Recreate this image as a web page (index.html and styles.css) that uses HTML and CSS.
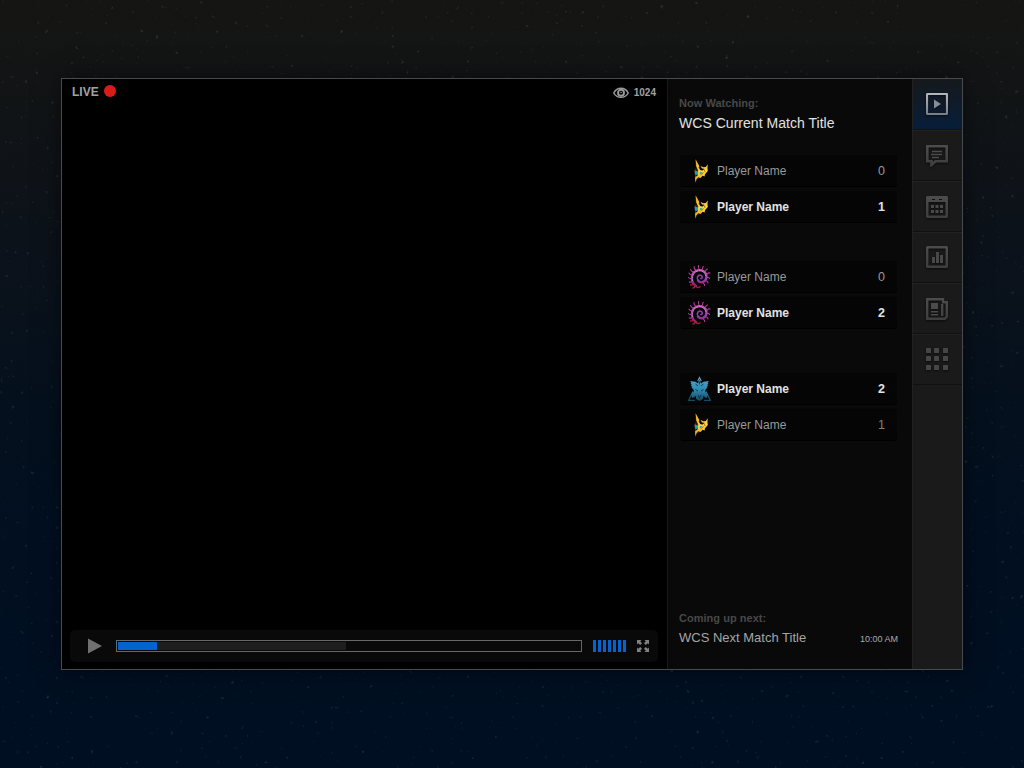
FILE: index.html
```html
<!DOCTYPE html>
<html lang="en">
<head>
<meta charset="utf-8">
<title>WCS Live</title>
<link rel="stylesheet" href="styles.css">
</head>
<body>
<svg class="stars" width="1024" height="768" aria-hidden="true">
  <filter id="specks" x="0" y="0" width="100%" height="100%">
    <feTurbulence type="fractalNoise" baseFrequency=".2" numOctaves="2" seed="8"/>
    <feColorMatrix values="0 0 0 0 .45  0 0 0 0 .58  0 0 0 0 .6  5 0 0 0 -3.650"/>
  </filter>
  <rect width="1024" height="768" filter="url(#specks)"/>
</svg>
<svg class="defs" width="0" height="0" aria-hidden="true">
  <defs>
    <linearGradient id="gold" x1="0" y1="0" x2="0" y2="1"><stop offset="0" stop-color="#f0a814"/><stop offset=".5" stop-color="#ffd840"/><stop offset="1" stop-color="#e9a510"/></linearGradient>
    <linearGradient id="violet" gradientUnits="userSpaceOnUse" x1="0" y1="5" x2="0" y2="22"><stop offset="0" stop-color="#cf58ac"/><stop offset=".6" stop-color="#963fb8"/><stop offset="1" stop-color="#93205e"/></linearGradient>
    <linearGradient id="teal" gradientUnits="userSpaceOnUse" x1="0" y1="1" x2="0" y2="25"><stop offset="0" stop-color="#4eb0d4"/><stop offset=".55" stop-color="#2e87ae"/><stop offset="1" stop-color="#124763"/></linearGradient>
    <linearGradient id="silver" gradientUnits="userSpaceOnUse" x1="0" y1="0" x2="0" y2="22"><stop offset="0" stop-color="#b4b8bc"/><stop offset="1" stop-color="#777c82"/></linearGradient>
    <linearGradient id="steel" gradientUnits="userSpaceOnUse" x1="0" y1="0" x2="0" y2="22"><stop offset="0" stop-color="#4c4c4c"/><stop offset="1" stop-color="#3e3e3e"/></linearGradient>
  </defs>
  <symbol id="protoss" viewBox="0 0 24 26">
    <path fill="#6b3c0c" d="M8.300 1l4 7 .7 4 3 4-3 4-2.500.5L8.300 25 8 17l-.8-4L9 10z"/>
    <path fill="url(#gold)" d="M8.700 1.500l3.500 6.500-.7 1.800 2 2.400 2.300.2 1.500-1.600-2.300-.3L13.500 8l3 1.200L18.800 9l1.900-2.800-.2 4L20.800 13 18 16.200l-.3 2.300-2-.8L13.500 20l-2.200-1-2.200 2.500L8 24.500 8.300 19l2.500-2.500-.3-2.500 1-1L9.500 10z"/>
    <path fill="#2c190a" d="M9.300 8.500l1.400 3-.8 2-1.600-1zM11 17l-2.300 2 .2-3.300z"/>
    <path fill="#18a0c8" d="M7.800 12.500l2.700.8.500 2-1.300 1.700-1.700-.6z"/>
    <path fill="#38a8b0" d="M13 14h2l-.5 1.800-1.700.4z"/>
    <path stroke="#7b480c" stroke-width=".7" fill="none" d="M13.500 17l3-2.500M17.500 11.500l.5 2.500"/>
  </symbol>
  <symbol id="zerg" viewBox="0 0 24 26">
    <g fill="none" stroke-linecap="round">
      <path stroke="#b03c94" stroke-width="1.100" d="M6 8Q4.500 7.500 3.500 5.500M8.500 6Q7 5 7 2.500M12 5Q11 3.500 11.500 1.500M15.500 5Q15.300 3.500 16.300 2.300M18.500 7Q19 5.500 20.500 5M20.300 10Q21.500 8.500 23 9M20.500 13.500Q22 13 22.500 14.500M19 17Q21 17 21 19M16.500 19.500Q18 20 17.500 21.500M4.500 11Q3 10.800 2 9M4 14.500Q2.500 14.800 1.500 13.500M5 17.500Q3.500 18.500 2.300 18"/>
      <path stroke="#b0142e" stroke-width="1.500" d="M6.500 19.500Q5.500 21.500 3.500 21M8 21.500Q7.800 23.500 6 24M9 22.500q2 2 4 .3"/>
      <path stroke="url(#violet)" stroke-width="2.300" d="M9 22C3.500 18.500 3.500 9.500 9 7c5-2.500 10.500.5 10.500 5.500 0 5.500-6 7.500-8.500 4"/>
      <path stroke="#8e3bab" stroke-width="1.600" d="M11 16.500c-2-3 .3-6 2.700-5.300 2.300.7 1.800 3.500.1 3.300"/>
      <path stroke="#e0a5d2" stroke-width=".7" stroke-dasharray=".8 1.900" d="M5.500 16.500C5 12 6.500 8 11 6.800c4-.8 8 2 7.800 6.200"/>
    </g>
  </symbol>
  <symbol id="terran" viewBox="0 0 24 26">
    <path fill="none" stroke="url(#teal)" stroke-width="1.200" d="M6 15.500L1.600 24.300H8M19 15.500l4.400 8.800H17M10.800 5l1.700-3.500L14.200 5"/>
    <path fill="url(#teal)" d="M12.500 3.500l1.500 4 2.500-1.700L22 5l-1.500 2 1 .3-1.300 1.600 1 .6-1.500 1.500.9.8-1.800 1.300-.8 2.400 1.500 1.500 1 2.500-.5 2.500-2-.5-1.500-2-.7 3.500-3.300 2-3.300-2-.7-3.500-1.500 2-2 .5-.5-2.500 1-2.500L7 15.500l-.8-2.400-1.800-1.300.9-.8-1.500-1.500 1-.6L3.500 7.300l1-.3L3 5l5.500.8L11 7.500z"/>
    <path stroke="#0d3046" stroke-width=".9" fill="none" d="M12.500 5.500v3M8.500 13.500l2.500 1.500M16.500 13.500L14 15M11.200 19l1.300 3.500 1.300-3.500M8.500 8l2.500 2M16.500 8L14 10"/>
  </symbol>
</svg>

<main class="player">
  <section class="video">
    <header class="video-top">
      <div class="live"><span class="live-label">LIVE</span><span class="live-dot"></span></div>
      <div class="viewers">
        <svg class="eye" width="16" height="12" viewBox="0 0 16 12"><path d="M.8 6C4-.2 12-.2 15.200 6 12 11.800 4 11.800.8 6z" fill="none" stroke="#999" stroke-width="1.500"/><circle cx="8" cy="5.800" r="3" fill="none" stroke="#999" stroke-width="1.900"/><circle cx="8" cy="5.500" r=".8" fill="#999"/></svg>
        <span class="viewer-count">1024</span>
      </div>
    </header>
    <div class="controls">
      <svg class="play" width="15" height="16" viewBox="0 0 15 16"><path d="M1 .500L15 8 1 15.500z" fill="#707070"/></svg>
      <div class="track"><div class="buffered"><div class="played"></div></div></div>
      <div class="volume"><i></i><i></i><i></i><i></i><i></i><i></i><i></i></div>
      <svg class="expand" width="12" height="12" viewBox="0 0 12 12"><g fill="#808080"><path d="M0 0h4.500L3.200 1.300 5 3.200 3.200 5 1.300 3.200 0 4.500z"/><path d="M12 0v4.500l-1.300-1.300L8.800 5 7 3.200l1.800-1.900L7.500 0z"/><path d="M0 12V7.500l1.300 1.300L3.200 7 5 8.800l-1.800 1.900L4.500 12z"/><path d="M12 12H7.500l1.300-1.300L7 8.800 8.800 7l1.900 1.800L12 7.500z"/></g></svg>
    </div>
  </section>

  <section class="info">
    <p class="caption now">Now Watching:</p>
    <h1 class="match-title">WCS Current Match Title</h1>
    <div class="match">
      <div class="row"><svg class="race" width="24" height="26"><use href="#protoss"/></svg><span class="name">Player Name</span><span class="score">0</span></div>
      <div class="row win"><svg class="race" width="24" height="26"><use href="#protoss"/></svg><span class="name">Player Name</span><span class="score">1</span></div>
    </div>
    <div class="match">
      <div class="row"><svg class="race" width="24" height="26"><use href="#zerg"/></svg><span class="name">Player Name</span><span class="score">0</span></div>
      <div class="row win"><svg class="race" width="24" height="26"><use href="#zerg"/></svg><span class="name">Player Name</span><span class="score">2</span></div>
    </div>
    <div class="match last">
      <div class="row win"><svg class="race" width="24" height="26"><use href="#terran"/></svg><span class="name">Player Name</span><span class="score">2</span></div>
      <div class="row"><svg class="race" width="24" height="26"><use href="#protoss"/></svg><span class="name">Player Name</span><span class="score dim">1</span></div>
    </div>
    <footer class="next">
      <p class="caption">Coming up next:</p>
      <div class="next-line"><h2 class="next-title">WCS Next Match Title</h2><span class="time">10:00 AM</span></div>
    </footer>
  </section>

  <nav class="rail">
    <a class="tab active"><svg width="22" height="22" viewBox="0 0 22 22"><rect x="1" y="1" width="20" height="20" rx=".6" fill="none" stroke="url(#silver)" stroke-width="2.200"/><path d="M8 6.500l7 4.500-7 4.500z" fill="#858d95"/></svg></a>
    <a class="tab chat"><svg width="22" height="22" viewBox="0 0 22 22"><path d="M1.300 1.300h19.400v15H9.500L5.500 20v-3.700H1.300z" fill="none" stroke="url(#steel)" stroke-width="2.600"/><path d="M6 6.500h10M5 9.500h11M6 12.500h7" stroke="#4b4b4b" stroke-width="1.300"/></svg></a>
    <a class="tab"><svg width="22" height="22" viewBox="0 0 22 22"><path fill="url(#steel)" fill-rule="evenodd" d="M1 0h20l1 1v20l-1 1H1l-1-1V1zM2.500 6v13.500h17V6zM6 3v1h3V3zM13 3v1h3V3z"/><path fill="#4a4a4a" d="M5 9h3v3H5zM9.500 9h3v3h-3zM14 9h3v3h-3zM5 14h3v3H5zM9.500 14h3v3h-3zM14 14h3v3h-3z"/></svg></a>
    <a class="tab up"><svg width="22" height="22" viewBox="0 0 22 22"><rect x="1.200" y="1.200" width="19.600" height="19.600" rx=".6" fill="none" stroke="url(#steel)" stroke-width="2.500"/><path fill="#484848" d="M6 11h3v6H6zM10 6h3v11h-3zM14 9h3v8h-3z"/></svg></a>
    <a class="tab"><svg width="22" height="22" viewBox="0 0 22 22"><path d="M1.200 1.200h15.800v3h3.800v14.600l-2 2H1.200zM16.200 18V6" fill="none" stroke="url(#steel)" stroke-width="2.400"/><path fill="#4b4b4b" d="M5 5h7v6H5zM5 13h7v1.500H5zM5 16h7v1.500H5z"/></svg></a>
    <a class="tab up"><svg width="22" height="22" viewBox="0 0 22 22"><g fill="#464646"><rect width="5" height="5" rx=".6"/><rect x="8" width="5" height="5" rx=".6"/><rect x="17" width="5" height="5" rx=".6"/><rect y="8" width="5" height="5" rx=".6"/><rect x="8" y="8" width="5" height="5" rx=".6"/><rect x="17" y="8" width="5" height="5" rx=".6"/><rect y="17" width="5" height="5" rx=".6"/><rect x="8" y="17" width="5" height="5" rx=".6"/><rect x="17" y="17" width="5" height="5" rx=".6"/></g></svg></a>
  </nav>
</main>
</body>
</html>
```
FILE: styles.css
```css
* { box-sizing: border-box; }

body {
  margin: 0;
  height: 768px;
  padding: 78px 61px 98px;
  overflow: hidden;
  font-family: "Liberation Sans", Arial, sans-serif;
  background: linear-gradient(#151513, #111416 110px, #0c121a 240px, #04101d 410px, #010f21 560px, #000f22 768px);
}

/* Star field behind the player */
.stars { position: absolute; top: 0; left: 0; opacity: .18; }

.defs { display: block; }

.player {
  position: relative;
  width: 902px;
  height: 592px;
  border: 1px solid #484b4e;
  display: flex;
  background: #000;
  box-shadow: 0 0 22px rgba(0,0,0,.5);
}

.video {
  width: 605px;
  padding: 0 10px 7px 8px;
  display: flex;
  flex-direction: column;
  justify-content: space-between;
}

.video-top { display: flex; justify-content: space-between; padding: 4px 1px 0 2px; }
.live { display: flex; align-items: center; gap: 5px; height: 16px; }
.live-label { font-size: 12px; font-weight: bold; color: #a2a2a2; padding-top: 2px; }
.live-dot { width: 12px; height: 12px; border-radius: 50%; background: #d91c19; }
.viewers { display: flex; align-items: center; gap: 5px; height: 19px; }
.viewer-count { font-size: 10px; font-weight: bold; color: #a0a0a0; }

.controls {
  height: 32px;
  width: 588px;
  border-radius: 5px;
  background: #090909;
  display: flex;
  align-items: center;
  padding-left: 17px;
}
.play { margin-right: 14px; }
.track { width: 466px; height: 12px; border: 1px solid #686868; padding: 1px; }
.buffered { width: 228px; height: 8px; background: #1e1e1e; }
.played { width: 39px; height: 8px; background: #0464cf; }
.volume { display: flex; gap: 2px; margin: 0 10px 0 11px; }
.volume i { width: 3px; height: 12px; background: #0464cf; }
.expand { margin-left: 1px; }

.info {
  width: 245px;
  border-left: 1px solid #191919;
  background: #090909;
  padding: 0 14px 0 11px;
  display: flex;
  flex-direction: column;
}
.caption { margin: 0; font-size: 11px; line-height: 14px; font-weight: bold; color: #484848; letter-spacing: .03px; }
.now { margin-top: 17px; }
.match-title { margin: 4px 0 23px; font-size: 14px; line-height: 18px; font-weight: normal; color: #e2e2e2; letter-spacing: .03px; }
.match { width: 217px; margin: 0 0 38px 1px; display: flex; flex-direction: column; gap: 4px; }
.match + .match { margin-bottom: 44px; }
.match.last { margin-bottom: 0; }
.row {
  height: 32px;
  border-radius: 3px;
  background: #050505;
  border-bottom: 1px solid #000;
  display: flex;
  align-items: center;
  padding: 0 12px 0 7px;
  color: #999;
  font-size: 12px;
}
.race { flex: none; margin-right: 6px; }
.name { flex: 1; }
.win { color: #e2e2e2; font-weight: bold; }
.score { font-size: 12.5px; }
.dim { color: #808074; }
.next { margin-top: auto; margin-bottom: 22px; }
.next-line { display: flex; align-items: center; justify-content: space-between; margin-top: 4px; }
.next-title { margin: 0; font-size: 13px; line-height: 18px; font-weight: normal; color: #a5a5a5; }
.time { font-size: 9px; color: #aaa; padding-top: 2px; }

.rail { width: 50px; background: #1a1a1a; border-left: 1px solid #212121; }
.tab {
  height: 51px;
  display: flex;
  align-items: center;
  padding: 2px 0 0 13px;
  border-bottom: 1px solid #101010;
  box-shadow: inset 0 1px #222;
}
.tab svg { filter: drop-shadow(0 1px 1px rgba(0,0,0,.6)); }
.tab.up { padding-top: 0; }
.tab.active { padding-top: 0; background: linear-gradient(#16191c, #071e3a); box-shadow: none; }
```
